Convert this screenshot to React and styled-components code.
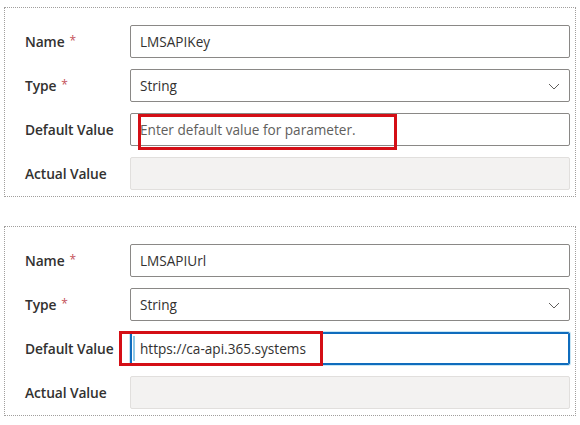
import React from 'react';
import styled, { createGlobalStyle } from 'styled-components';

const GlobalStyle = createGlobalStyle`
  html, body {
    margin: 0;
    padding: 0;
    background: #ffffff;
  }
  body {
    font-family: 'Open Sans', 'Noto Sans', sans-serif;
    color: #323130;
  }
`;

const Page = styled.div`
  display: flex;
  flex-direction: column;
  gap: 29px;
  padding: 7px 4px 0 4px;
  width: 572px;
`;

const Panel = styled.section`
  display: grid;
  grid-template-columns: 105px 1fr;
  grid-auto-rows: 33px;
  row-gap: 11px;
  align-items: center;
  padding: 17px 5px 6px 20px;
  border: 1px dotted #a19f9d;
`;

const Label = styled.label`
  font-size: 13.8px;
  font-weight: 600;
  color: #323130;
  white-space: nowrap;
  letter-spacing: -0.1px;
`;

const Required = styled.span`
  color: #c4515a;
  font-weight: 400;
  font-size: 12px;
  margin-left: 5px;
  vertical-align: 2px;
`;

const Field = styled.div`
  position: relative;
  display: flex;
  align-items: center;
  height: 33px;
  box-sizing: border-box;
  padding: 0 9px;
  border-radius: 2px;
  border: 1px solid ${p => (p.focused ? '#0f6cbd' : '#8a8886')};
  background: ${p => (p.disabled ? '#f3f2f1' : '#ffffff')};
  ${p => p.disabled && 'border-color: #e1dfdd;'}
  ${p => p.focused && 'box-shadow: inset 0 0 0 1px #0f6cbd, 0 0 0 1px #c7e6f5;'}
  font-size: 13.6px;
  color: ${p => (p.placeholder ? '#605e5c' : '#323130')};
`;

const Caret = styled.span`
  position: absolute;
  left: 2px;
  top: 3px;
  bottom: 3px;
  width: 2px;
  background: #8fc8e8;
`;

const Chevron = styled.svg`
  position: absolute;
  right: 9px;
  top: 13px;
`;

const Highlight = styled.div`
  position: absolute;
  box-sizing: border-box;
  border: 3px solid #d40f16;
  pointer-events: none;
`;

const params = [
  {
    name: 'LMSAPIKey',
    value: 'Enter default value for parameter.',
    placeholder: true,
    focused: false,
    box: { left: 7, top: 0, width: 259, height: 36 },
  },
  {
    name: 'LMSAPIUrl',
    value: 'https://ca-api.365.systems',
    placeholder: false,
    focused: true,
    box: { left: -12, top: -2, width: 204, height: 35 },
  },
];

const App = () => (
  <>
    <GlobalStyle />
    <Page>
      {params.map((p, i) => (
        <Panel key={i}>
          <Label>
            Name<Required>*</Required>
          </Label>
          <Field>{p.name}</Field>

          <Label>
            Type<Required>*</Required>
          </Label>
          <Field>
            String
            <Chevron width="12" height="7" viewBox="0 0 12 7">
              <path d="M1 1l5 5 5-5" fill="none" stroke="#605e5c" strokeWidth="1" />
            </Chevron>
          </Field>

          <Label>Default Value</Label>
          <Field placeholder={p.placeholder} focused={p.focused}>
            {p.focused && <Caret />}
            {p.value}
            <Highlight style={p.box} />
          </Field>

          <Label>Actual Value</Label>
          <Field disabled />
        </Panel>
      ))}
    </Page>
  </>
);

export default App;
